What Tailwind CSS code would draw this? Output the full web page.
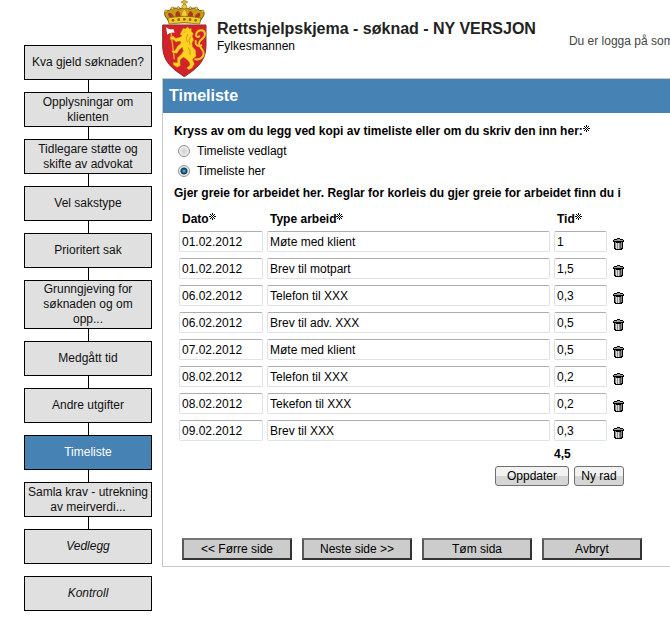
<!DOCTYPE html>
<html lang="nn">
<head>
<meta charset="utf-8">
<meta name="viewport" content="width=device-width, initial-scale=1">
<title>Rettshjelpskjema - søknad</title>
<script src="https://cdn.jsdelivr.net/npm/@tailwindcss/browser@4"></script>
</head>
<body class="overflow-x-hidden bg-white font-['Liberation_Sans',Arial,sans-serif] text-[12px] leading-[15px] text-black">
<svg class="hidden" aria-hidden="true">
  <symbol id="trash" viewBox="0 0 11 12">
    <g shape-rendering="crispEdges">
      <path d="M4 0h3v1H4zM3 1h1v1H3zM7 1h1v1H7zM1 1h2v1H1zM8 1h2v1H8zM0 2h11v2H0zM1 4h9v7H1zM2 11h7v1H2z" fill="#000"/>
      <path d="M4 1h3v1H4zM1 2h9v1H1z" fill="#999"/>
      <path d="M2 4h1v6H2zM4 5h1v6H4zM6 5h1v6H6zM8 4h1v6H8z" fill="#8a8a8a"/>
      <path d="M3 5h1v6H3zM5 5h1v6H5z" fill="#ddd"/>
      <path d="M7 5h1v6H7z" fill="#555"/>
    </g>
  </symbol>
  <symbol id="required" viewBox="0 0 7 7">
    <path shape-rendering="crispEdges" fill="#000" d="M3 0h1v1H3zM1 1h1v1H1zM5 1h1v1H5zM2 2h1v1H2zM4 2h1v1H4zM3 1h1v1H3zM0 3h2v1H0zM3 3h1v1H3zM5 3h2v1H5zM2 4h1v1H2zM4 4h1v1H4zM1 5h1v1H1zM3 5h1v1H3zM5 5h1v1H5zM3 6h1v1H3z"/>
  </symbol>
</svg>
<div class="flex items-start pl-6">
  <nav aria-label="Steg" class="flex w-32 shrink-0 flex-col pt-[45px] text-center text-[#111]">
    <a href="#" class="flex min-h-[35px] items-center justify-center border border-black bg-[#e0e0e0]">Kva gjeld søknaden?</a>
    <span class="h-3 w-px self-center bg-black"></span>
    <a href="#" class="flex min-h-[35px] items-center justify-center border border-black bg-[#e0e0e0] px-3">Opplysningar om klienten</a>
    <span class="h-3 w-px self-center bg-black"></span>
    <a href="#" class="flex min-h-[35px] items-center justify-center border border-black bg-[#e0e0e0] px-3">Tidlegare støtte og skifte av advokat</a>
    <span class="h-3 w-px self-center bg-black"></span>
    <a href="#" class="flex min-h-[35px] items-center justify-center border border-black bg-[#e0e0e0]">Vel sakstype</a>
    <span class="h-3 w-px self-center bg-black"></span>
    <a href="#" class="flex min-h-[35px] items-center justify-center border border-black bg-[#e0e0e0]">Prioritert sak</a>
    <span class="h-3 w-px self-center bg-black"></span>
    <a href="#" class="flex min-h-[35px] items-center justify-center border border-black bg-[#e0e0e0] px-3 py-px">Grunngjeving for søknaden og om opp...</a>
    <span class="h-3 w-px self-center bg-black"></span>
    <a href="#" class="flex min-h-[35px] items-center justify-center border border-black bg-[#e0e0e0]">Medgått tid</a>
    <span class="h-3 w-px self-center bg-black"></span>
    <a href="#" class="flex min-h-[35px] items-center justify-center border border-black bg-[#e0e0e0]">Andre utgifter</a>
    <span class="h-3 w-px self-center bg-black"></span>
    <a href="#" aria-current="step" class="flex min-h-[35px] items-center justify-center border border-black bg-[#4682b4] text-white">Timeliste</a>
    <span class="h-3 w-px self-center bg-black"></span>
    <a href="#" class="flex min-h-[35px] items-center justify-center border border-black bg-[#e0e0e0]">Samla krav - utrekning av meirverdi...</a>
    <span class="h-3 w-px self-center bg-black"></span>
    <a href="#" class="flex min-h-[35px] items-center justify-center border border-black bg-[#e0e0e0] italic">Vedlegg</a>
    <span class="h-3"></span>
    <a href="#" class="flex min-h-[35px] items-center justify-center border border-black bg-[#e0e0e0] italic">Kontroll</a>
  </nav>

  <div class="ml-[10px] min-w-0 flex-1 overflow-hidden whitespace-nowrap">
    <header class="flex h-[78px] items-start">
      <svg class="h-[78px] w-[47px] shrink-0" viewBox="21 0 141 234" role="img" aria-label="Riksvåpen">
        <path d="M23 75H153V138C153 188 118 210 88 230C58 210 23 188 23 138Z" fill="#d4222c" stroke="#8f3026" stroke-width="3"/>
        <path d="M44 68 33 52C24 40 30 29 42 32 50 22 64 22 71 29 77 22 98 22 105 29 112 22 126 22 134 32 147 29 152 40 143 52L132 68Z" fill="#c99a1a" stroke="#6f5614" stroke-width="3"/>
        <path d="M45 52C37 45 38 38 44 38 52 40 56 46 56 52ZM63 52C60 42 62 34 69 33 76 38 77 44 77 52ZM99 52C98 44 100 38 107 33 114 36 115 44 113 52ZM120 52C120 46 124 40 132 38 138 40 138 46 131 52Z" fill="#a63a1c"/>
        <path d="M82 52C80 42 82 34 88 30 94 34 96 42 94 52Z" fill="#f1cc3a"/>
        <g fill="#f1cc3a" stroke="#6f5614" stroke-width="1.500"><circle cx="33" cy="34" r="4"/><circle cx="52" cy="25" r="4"/><circle cx="70" cy="24" r="4"/><circle cx="106" cy="24" r="4"/><circle cx="124" cy="25" r="4"/><circle cx="143" cy="34" r="4"/><circle cx="88" cy="20" r="7"/></g>
        <path d="M85 14V9H79V4H85V-2H91V4H97V9H91V14Z" fill="#dcb526" stroke="#6f5614" stroke-width="1"/>
        <path d="M38 54Q88 44 138 54L134 72Q88 64 42 72Z" fill="#f3c922" stroke="#6f5614" stroke-width="2"/>
        <g fill="#8e5c14"><circle cx="54" cy="61" r="4"/><circle cx="71" cy="59" r="4"/><circle cx="88" cy="58" r="4"/><circle cx="105" cy="59" r="4"/><circle cx="122" cy="61" r="4"/></g>
        <path d="M48 95 58 178" stroke="#e9b71a" stroke-width="4" fill="none"/>
        <path d="M33 82Q43 91 55 87L59 98Q47 95 37 104Z" fill="#fff"/>
        <path d="M121 178C143 180 151 163 142 149 136 140 126 132 136 122 143 114 151 112 150 101 148 87 129 88 124 101 121 109 127 113 133 109M139 136C128 141 120 134 122 123" fill="none" stroke="#f7ca20" stroke-width="6" stroke-linecap="round"/>
        <path d="M81 91 85 84 91 87 97 81 103 86 109 85 109 93 115 101 112 109 116 119 111 129 113 141 122 151 123 169 113 178 118 192 111 205 101 209 95 204 105 195 102 185 93 176 85 172 75 180 76 197 67 202 55 195 54 187 67 188 67 174 80 161 85 152 82 142 73 149 66 160 53 159 50 152 60 151 68 138 78 129 75 123 63 126 55 119 46 119 45 110 55 108 62 115 74 112 81 107 75 103 78 97Z" fill="#ffd21f" stroke="#bd7917" stroke-width="1.500"/>
        <path d="M91 94 86 99M98 103Q90 116 97 126M106 110Q99 122 105 134M99 142Q108 151 105 164" fill="none" stroke="#c88716" stroke-width="2.500"/>
      </svg>
      <div class="ml-2 pt-[19px]">
        <h1 class="text-[16px] leading-5 font-bold text-[#222]">Rettshjelpskjema - søknad - NY VERSJON</h1>
        <p>Fylkesmannen</p>
      </div>
      <p class="ml-[33px] pt-[34px] text-[#444]">Du er logga på som</p>
    </header>

    <main class="border-y border-l border-[#c8c8c8] pb-[6px]">
      <h2 class="bg-[#4682b4] px-[6px] py-[7px] text-[16px] leading-5 font-bold text-white">Timeliste</h2>
      <form class="pt-2 pl-[11px]">
        <fieldset>
          <legend class="flex h-5 items-center font-bold">Kryss av om du legg ved kopi av timeliste eller om du skriv den inn her:<svg class="mb-[6px] size-[7px]"><use href="#required"/></svg></legend>
          <label class="flex h-5 items-center gap-[7px] pl-1"><input type="radio" name="kopi" class="size-3 appearance-none rounded-full border border-[#8e8f8f] bg-[radial-gradient(circle,#d0d0d0_0%,#e6e6e6_50%,#f6f6f6_75%)] checked:bg-[radial-gradient(circle,#56c1e8_0px,#1b5f8c_2px,#0d3553_3px,#f0f0f0_4px)]">Timeliste vedlagt</label>
          <label class="flex h-5 items-center gap-[7px] pl-1"><input type="radio" name="kopi" checked class="size-3 appearance-none rounded-full border border-[#8e8f8f] bg-[radial-gradient(circle,#d0d0d0_0%,#e6e6e6_50%,#f6f6f6_75%)] checked:bg-[radial-gradient(circle,#56c1e8_0px,#1b5f8c_2px,#0d3553_3px,#f0f0f0_4px)]">Timeliste her</label>
        </fieldset>
        <p class="mt-[2px] leading-5 font-bold">Gjer greie for arbeidet her. Reglar for korleis du gjer greie for arbeidet finn du i</p>
        <table class="mt-[6px] ml-[5px] w-[449px] table-fixed border-collapse">
          <colgroup><col class="w-[88px]"><col class="w-[287px]"><col class="w-[57px]"><col></colgroup>
          <thead>
            <tr class="h-5 text-left">
              <th class="p-0 pl-[3px]"><span class="flex items-center">Dato<svg class="mb-[6px] size-[7px]"><use href="#required"/></svg></span></th>
              <th class="p-0 pl-[3px]"><span class="flex items-center">Type arbeid<svg class="mb-[6px] size-[7px]"><use href="#required"/></svg></span></th>
              <th class="p-0 pl-[3px]"><span class="flex items-center">Tid<svg class="mb-[6px] size-[7px]"><use href="#required"/></svg></span></th>
              <td></td>
            </tr>
          </thead>
          <tbody id="rows"></tbody>
          <tfoot>
            <tr class="h-[18px]"><td></td><td></td><td class="p-0 font-bold">4,5</td><td></td></tr>
          </tfoot>
        </table>
        <div class="mt-[3px] ml-1 flex w-[446px] justify-end gap-[5px]">
          <button type="button" class="h-5 w-[74px] rounded-[3px] border border-[#707070] bg-linear-to-b from-[#f2f2f2] from-50% to-[#d6d6d6] to-50% leading-[18px]">Oppdater</button>
          <button type="button" class="h-5 w-[50px] rounded-[3px] border border-[#707070] bg-linear-to-b from-[#f2f2f2] from-50% to-[#d6d6d6] to-50% leading-[18px]">Ny rad</button>
        </div>
        <div class="mt-[52px] ml-2 flex gap-[10px]">
          <button type="button" class="h-[22px] w-[110px] border-2 border-t-[#767676] border-r-[#333] border-b-[#333] border-l-[#5a5a5a] bg-[#ccc]">&lt;&lt; Førre side</button>
          <button type="button" class="h-[22px] w-[110px] border-2 border-t-[#767676] border-r-[#333] border-b-[#333] border-l-[#5a5a5a] bg-[#ccc]">Neste side &gt;&gt;</button>
          <button type="button" class="h-[22px] w-[110px] border-2 border-t-[#767676] border-r-[#333] border-b-[#333] border-l-[#5a5a5a] bg-[#ccc]">Tøm sida</button>
          <button type="button" class="h-[22px] w-[100px] border-2 border-t-[#767676] border-r-[#333] border-b-[#333] border-l-[#5a5a5a] bg-[#ccc]">Avbryt</button>
        </div>
      </form>
    </main>
  </div>
</div>
<script>
  const entries = [
    ["01.02.2012", "Møte med klient", "1"],
    ["01.02.2012", "Brev til motpart", "1,5"],
    ["06.02.2012", "Telefon til XXX", "0,3"],
    ["06.02.2012", "Brev til adv. XXX", "0,5"],
    ["07.02.2012", "Møte med klient", "0,5"],
    ["08.02.2012", "Telefon til XXX", "0,2"],
    ["08.02.2012", "Tekefon til XXX", "0,2"],
    ["09.02.2012", "Brev til XXX", "0,3"]
  ];
  const labels = ["Dato", "Type arbeid", "Tid"];
  const cell = (value, i) => `<td class="p-0 pr-1 pb-[2px]"><input type="text" aria-label="${labels[i]}" value="${value}" class="block h-[21px] w-full rounded-[2px] border border-[#dde1ea] border-t-[#abadb3] bg-white px-[2px]"></td>`;
  document.getElementById("rows").innerHTML = entries.map(e =>
    `<tr class="h-[27px]">${e.map(cell).join("")}<td class="p-0 pt-[2px] pl-[2px]"><button type="button" aria-label="Slett rad" class="block h-3 w-[11px]"><svg class="h-3 w-[11px]"><use href="#trash"/></svg></button></td></tr>`
  ).join("");
</script>
</body>
</html>
